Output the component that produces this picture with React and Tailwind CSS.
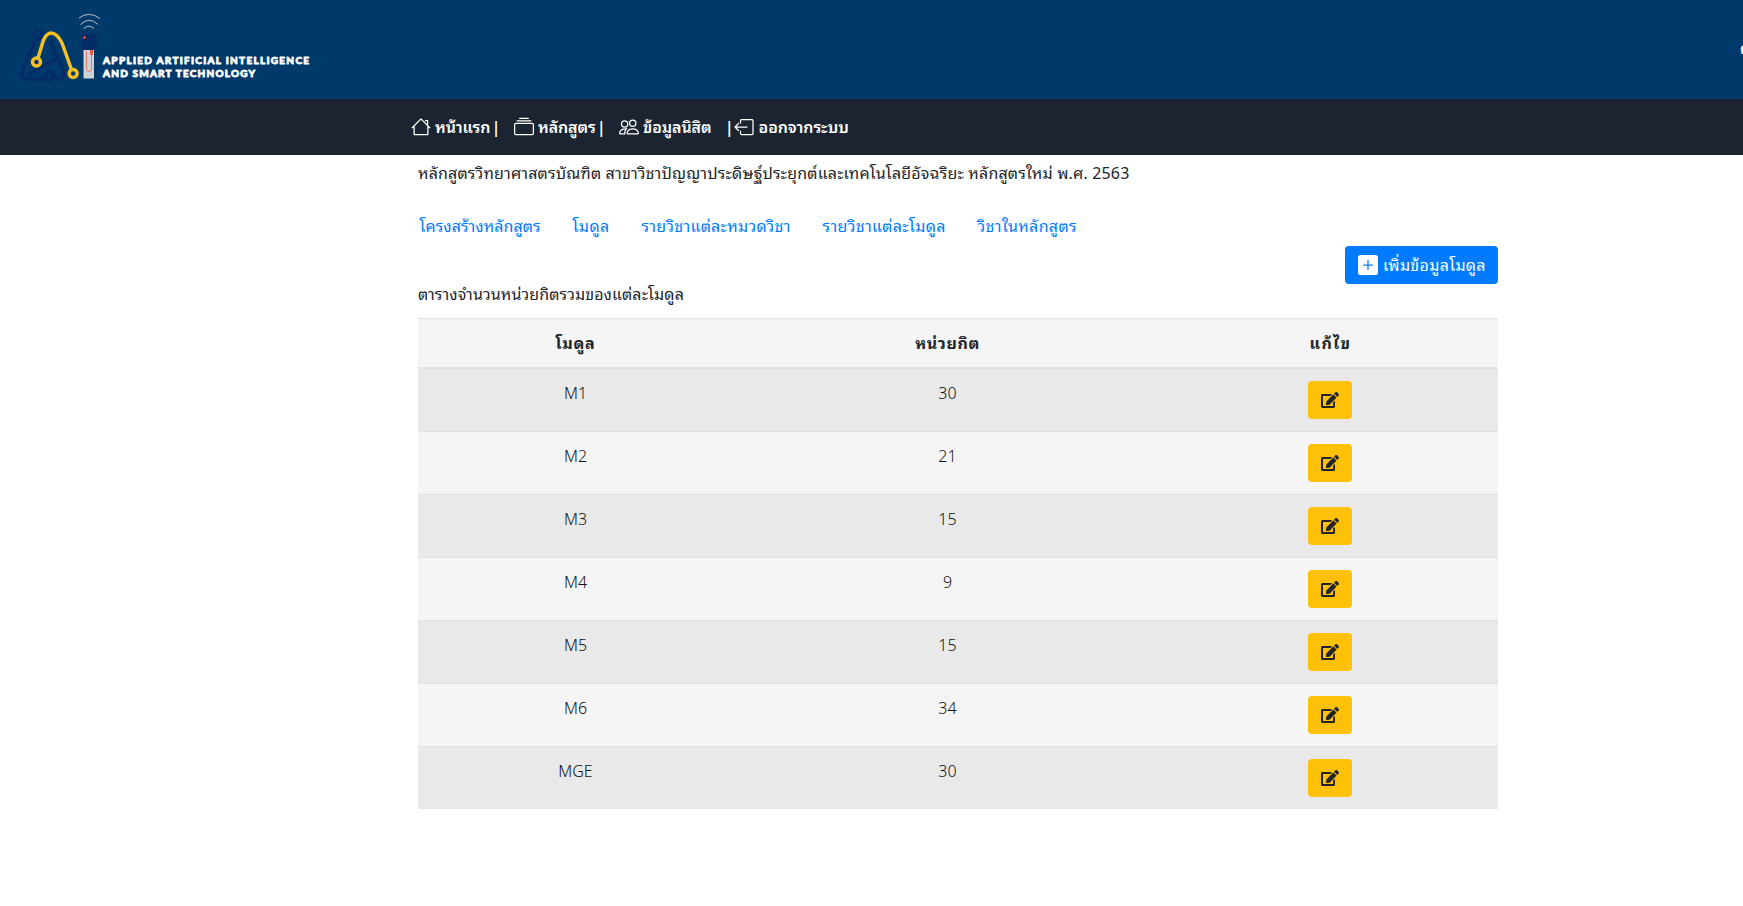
import { BsCollection, BsPeople, BsPlusSquareFill } from "react-icons/bs";
import { FaEdit } from "react-icons/fa";

function Logo() {
  return (
    <svg className="block h-[99px] w-[330px] shrink-0" viewBox="0 0 330 99" fill="none">
      <g stroke="#042c66" strokeWidth="3.600" strokeLinecap="round" strokeLinejoin="round">
        <circle cx="38" cy="34.500" r="4" />
        <path d="M36 38 L22 72 Q20 79 27 79 L46 79" />
        <path d="M29 74 L55 59.500" />
        <path d="M50.500 42 L62.500 68 Q66 79 58 79 L53 75.500" />
        <circle cx="49.500" cy="75.500" r="4" />
      </g>
      <g stroke="#fbbf24" strokeWidth="3.400" strokeLinecap="round">
        <path d="M38 58 L43.500 40 Q47 33 51 33 Q57 33 62 43 L71.500 69.500" />
        <circle cx="36.500" cy="62" r="4" />
        <circle cx="73.200" cy="73.500" r="4" />
      </g>
      <g stroke="#b9c0c8" strokeWidth="1">
        <path d="M79 18 Q89 10.500 100 18.500" />
        <path d="M80.500 24.500 Q89 16 98 24.500" />
        <path d="M83.500 28.500 Q89 24 94 28.500" />
      </g>
      <path d="M81.500 34 H97 V50 H81.500 V42 H78.500 V40 H81.500 Z" fill="#042c66" />
      <path d="M83.500 50 H94 V78.500 H83.500 Z" fill="#cfd1d6" />
      <path d="M83 37.500 H86 M84.500 36 V39" stroke="#f15b45" />
      <path d="M86.500 51 V69 Q86.500 71.500 89 71.500 Q91.500 71.500 91.500 69 V51" stroke="#ef7665" />
      <path d="M90 50 H93 V55 H90 Z" fill="#ef5b4a" />
      <g fill="#fff" stroke="#fff" strokeWidth=".8" strokeLinejoin="round" fontFamily="Lato, sans-serif" fontWeight="900" fontSize="10">
        <text x="103" y="63.500" textLength="206">APPLIED ARTIFICIAL INTELLIGENCE</text>
        <text x="103" y="76.500" textLength="152">AND SMART TECHNOLOGY</text>
      </g>
    </svg>
  );
}

function HouseIcon() {
  return (
    <svg className="h-5 w-5 shrink-0" viewBox="0 0 20 20" fill="none" stroke="currentColor" strokeWidth="1.250" strokeLinecap="round" strokeLinejoin="round">
      <path d="M3.100 9 V17.500 H16.900 V9 M1.200 10.700 L10 1.900 L18.800 10.700 M14.500 3.500 H16.600 V8" />
    </svg>
  );
}

function LeaveIcon() {
  return (
    <svg className="h-5 w-5 shrink-0" viewBox="0 0 20 20" fill="none" stroke="currentColor" strokeWidth="1.250" strokeLinecap="round" strokeLinejoin="round">
      <path d="M6.500 6 V3.500 Q6.500 2.500 7.500 2.500 H18 Q19 2.500 19 3.500 V16.500 Q19 17.500 18 17.500 H7.500 Q6.500 17.500 6.500 16.500 V14 M13 10 H1 M4.500 6.500 L1 10 L4.500 13.500" />
    </svg>
  );
}

const modules = [
  ["M1", 30],
  ["M2", 21],
  ["M3", 15],
  ["M4", 9],
  ["M5", 15],
  ["M6", 34],
  ["MGE", 30],
];

export default function App() {
  return (
    <div className="h-[906px] w-full overflow-hidden bg-white font-['Noto_Sans_Thai_Looped','Noto_Sans',sans-serif] text-[16px] leading-6 text-[#212529]">
      <header className="flex h-[99px] items-center justify-between bg-[#003a6b]">
        <Logo />
        <span className="w-[3px] pb-1.5 font-semibold whitespace-nowrap text-white">ค</span>
      </header>
      <nav className="flex h-14 items-center bg-[#1c2431] pl-[411px] font-semibold whitespace-nowrap text-white">
        <a className="flex w-[103px] items-center gap-1"><HouseIcon /><span className="-mt-0.5 tracking-[-0.15px] [word-spacing:-2.5px]">หน้าแรก |</span></a>
        <a className="flex w-[105px] items-center gap-1"><BsCollection className="h-5 w-5 shrink-0" /><span className="-mt-0.5 tracking-[-0.15px] [word-spacing:-2.5px]">หลักสูตร |</span></a>
        <a className="flex w-[106px] items-center gap-1"><BsPeople className="h-5 w-5 shrink-0" /><span className="-mt-0.5 tracking-[-0.1px]">ข้อมูลนิสิต</span></a>
        <a className="flex items-center"><span className="-mt-0.5">|</span><LeaveIcon /><span className="-mt-0.5 ml-[5px] tracking-[-0.1px]">ออกจากระบบ</span></a>
      </nav>
      <main className="ml-[418px] w-[1080px] whitespace-nowrap">
        <p className="pt-[5px] tracking-[0.17px]">หลักสูตรวิทยาศาสตรบัณฑิต สาขาวิชาปัญญาประดิษฐ์ประยุกต์และเทคโนโลยีอัจฉริยะ หลักสูตรใหม่ พ.ศ. 2563</p>
        <div className="mt-[29px] flex gap-8 pl-[1.5px] text-[#007bff]">
          <a className="w-[121px] tracking-[0.05px]">โครงสร้างหลักสูตร</a>
          <a className="w-[37px] tracking-[0.4px]">โมดูล</a>
          <a className="w-[149px] tracking-[0.25px]">รายวิชาแต่ละหมวดวิชา</a>
          <a className="w-[123px] tracking-[0.34px]">รายวิชาแต่ละโมดูล</a>
          <a className="tracking-[0.35px]">วิชาในหลักสูตร</a>
        </div>
        <div className="mt-[9px] flex justify-end">
          <button className="flex h-[38px] w-[153px] items-center gap-[5px] rounded bg-[#007bff] pl-[13px] tracking-[0.3px] text-white">
            <BsPlusSquareFill className="h-5 w-5 shrink-0" />
            <span className="-mt-0.5">เพิ่มข้อมูลโมดูล</span>
          </button>
        </div>
        <p className="-mt-[3px] tracking-[0.09px]">ตารางจำนวนหน่วยกิตรวมของแต่ละโมดูล</p>
        <div className="mt-[13px] bg-[#f5f5f5] text-center">
          <div className="grid h-[51px] grid-cols-[314px_430px_336px] border-t border-b-2 border-[#dee2e6] pt-[11px] font-bold">
            <div className="pl-px tracking-[0.7px]">โมดูล</div>
            <div className="pl-px tracking-[0.6px]">หน่วยกิต</div>
            <div className="pl-px tracking-[1.4px]">แก้ไข</div>
          </div>
          {modules.map(([name, credits]) => (
            <div key={name} className="grid grid-cols-[314px_430px_336px] border-t border-[#dee2e6] pt-[11px] pb-3 odd:bg-[#f5f5f5] even:bg-[#e9e9e9] nth-2:border-t-0">
              <div className="pl-px font-[350] text-[#101214]">{name}</div>
              <div className="pl-px font-[350] text-[#101214]">{credits}</div>
              <div className="flex justify-center pt-px">
                <button className="flex h-[38px] w-11 items-center justify-center rounded bg-[#ffc107]"><FaEdit className="h-4 w-[18px]" /></button>
              </div>
            </div>
          ))}
        </div>
      </main>
    </div>
  );
}
